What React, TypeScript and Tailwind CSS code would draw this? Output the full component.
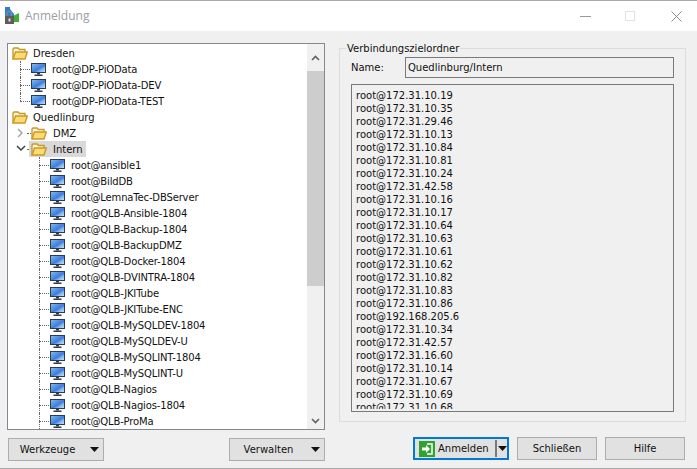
const font = { fontFamily: '"DejaVu Sans", sans-serif' };

function Folder() {
  return (
    <svg width="16" height="13" viewBox="0 0 16 13" className="shrink-0">
      <path d="M1 12V2L2 1H6L7.5 2.5H13V5" fill="#fff6cf" stroke="#c8982c" strokeWidth="1.4" />
      <path d="M1 12L3.5 5H15.3L13 12Z" fill="#fcdc6e" stroke="#c8982c" strokeWidth="1.4" />
    </svg>
  );
}

function Monitor() {
  return (
    <svg width="15" height="13" viewBox="0 0 15 13" className="shrink-0">
      <defs>
        <linearGradient id="scr" x1="0" y1="0" x2="1" y2="1">
          <stop offset="0" stopColor="#8bbcf0" />
          <stop offset="0.55" stopColor="#3b7fdb" />
          <stop offset="0.7" stopColor="#7fb0ea" />
          <stop offset="1" stopColor="#d8e8f8" />
        </linearGradient>
      </defs>
      <rect x="0.5" y="0.5" width="14" height="9" fill="url(#scr)" stroke="#2c3b4d" />
      <rect x="6" y="10" width="3" height="1.5" fill="#2c3b4d" />
      <rect x="3.5" y="11.5" width="8" height="1.5" fill="#2c3b4d" />
    </svg>
  );
}

type Row = { label: string; kind: "group" | "folder" | "host" | "sub"; chevron?: "right" | "down"; selected?: boolean; last?: boolean };

const rows: Row[] = [
  { label: "Dresden", kind: "group" },
  { label: "root@DP-PiOData", kind: "host" },
  { label: "root@DP-PiOData-DEV", kind: "host" },
  { label: "root@DP-PiOData-TEST", kind: "host", last: true },
  { label: "Quedlinburg", kind: "group" },
  { label: "DMZ", kind: "folder", chevron: "right" },
  { label: "Intern", kind: "folder", chevron: "down", selected: true },
  ...[
    "root@ansible1",
    "root@BildDB",
    "root@LemnaTec-DBServer",
    "root@QLB-Ansible-1804",
    "root@QLB-Backup-1804",
    "root@QLB-BackupDMZ",
    "root@QLB-Docker-1804",
    "root@QLB-DVINTRA-1804",
    "root@QLB-JKITube",
    "root@QLB-JKITube-ENC",
    "root@QLB-MySQLDEV-1804",
    "root@QLB-MySQLDEV-U",
    "root@QLB-MySQLINT-1804",
    "root@QLB-MySQLINT-U",
    "root@QLB-Nagios",
    "root@QLB-Nagios-1804",
    "root@QLB-ProMa",
  ].map((label) => ({ label, kind: "sub" as const })),
];

const ips = [
  "172.31.10.19", "172.31.10.35", "172.31.29.46", "172.31.10.13", "172.31.10.84", "172.31.10.81",
  "172.31.10.24", "172.31.42.58", "172.31.10.16", "172.31.10.17", "172.31.10.64", "172.31.10.63",
  "172.31.10.61", "172.31.10.62", "172.31.10.82", "172.31.10.83", "172.31.10.86", "192.168.205.6",
  "172.31.10.34", "172.31.42.57", "172.31.16.60", "172.31.10.14", "172.31.10.67", "172.31.10.69", "172.31.10.68",
];

function TreeRow({ r }: { r: Row }) {
  if (r.kind === "group") {
    return (
      <div className="h-4 flex items-center pl-[4px] gap-[5px]">
        <Folder />
        <span>{r.label}</span>
      </div>
    );
  }
  if (r.kind === "host") {
    return (
      <div className="h-4 flex items-center pl-[23px] gap-[6px] relative">
        <span className={`absolute top-0 left-[12px] w-0 border-l border-dotted border-[#666] ${r.last ? "h-[8px]" : "h-full"}`} />
        <span className="absolute top-[8px] left-[12px] w-[10px] h-0 border-t border-dotted border-[#666]" />
        <Monitor />
        <span className="tracking-[-0.15px]">{r.label}</span>
      </div>
    );
  }
  if (r.kind === "folder") {
    return (
      <div className="h-4 flex items-center pl-[21px] relative">
        <span className="absolute top-[8px] left-[19px] w-[4px] h-0 border-t border-dotted border-[#666]" />
        <span className="absolute left-[8px] top-[3px]">
          {r.chevron === "right" ? (
            <svg width="8" height="10" viewBox="0 0 8 10" className="block"><path d="M2 1L6 5L2 9" fill="none" stroke="#a6a6a6" strokeWidth="1.5" /></svg>
          ) : (
            <svg width="10" height="8" viewBox="0 0 10 8" className="block"><path d="M1 2L5 6L9 2" fill="none" stroke="#404040" strokeWidth="1.5" /></svg>
          )}
        </span>
        <div className={`relative flex items-center gap-[6px] h-4 pl-[2px] pr-[3px] ${r.selected ? "bg-[#d9d9d9]" : ""}`}>
          <Folder />
          <span>{r.label}</span>
        </div>
      </div>
    );
  }
  return (
    <div className="h-4 flex items-center pl-[42px] gap-[6px] relative">
      <span className="absolute top-0 h-full w-0 border-l border-dotted border-[#666] left-[31px]" />
      <span className="absolute top-[8px] left-[31px] w-[10px] h-0 border-t border-dotted border-[#666]" />
      <Monitor />
      <span className="tracking-[-0.15px]">{r.label}</span>
    </div>
  );
}

function DropButton({ label }: { label: string }) {
  return (
    <button className="w-[96px] h-[23px] border border-[#adadad] bg-[#e1e1e1] flex items-center">
      <span className="w-[77px] text-center">{label}</span>
      <svg width="9" height="5" viewBox="0 0 9 5" className="ml-[4px] shrink-0"><path d="M0 0H9L4.5 5Z" fill="#111" /></svg>
    </button>
  );
}

export default function App() {
  return (
    <div className="w-[697px] h-[469px] bg-[#f0f0f0] flex flex-col overflow-hidden text-[10px] text-[#111] border-t border-b border-[#a9a9a9]" style={font}>
      <div className="h-[30px] bg-white flex items-center shrink-0">
        <svg width="18" height="18" viewBox="0 0 18 18" className="ml-[4px] shrink-0">
          <path d="M1 0H6V2L10 7V10H1Z" fill="#2f7fd0" />
          <path d="M9 9L15 6V15H9L8 12Z" fill="#3fae34" />
          <path d="M3 9V6.5a2.2 2.2 0 0 1 4.4 0V9" fill="none" stroke="#888" strokeWidth="1.3" />
          <rect x="1" y="9" width="9" height="8" fill="#5c5c5c" />
          <rect x="4.5" y="11.5" width="2" height="3" fill="#ddd" />
        </svg>
        <span className="ml-[3px] text-[12px] text-[#9aa0a6] font-['Open_Sans']">Anmeldung</span>
        <div className="ml-auto flex items-center">
          <span className="w-[11px] h-px bg-[#9a9a9a] mr-[34px]" />
          <span className="w-[10px] h-[10px] border border-[#e3e3e3] mr-[36px]" />
          <svg width="11" height="11" viewBox="0 0 11 11" className="mr-[15px] shrink-0"><path d="M0.5 0.5L10.5 10.5M10.5 0.5L0.5 10.5" stroke="#8c8c8c" /></svg>
        </div>
      </div>

      <div className="flex flex-1 min-h-0 pt-[12px] pl-[7px] pr-[11px] gap-[14px]">
        <div className="w-[318px] flex flex-col shrink-0">
          <div className="h-[387px] border border-[#828790] bg-white flex overflow-hidden shrink-0">
            <div className="flex-1 pt-px overflow-hidden">
              {rows.map((r) => <TreeRow key={r.label} r={r} />)}
            </div>
            <div className="w-[17px] bg-[#f0f0f0] flex flex-col shrink-0">
              <div className="h-[27px] flex items-center justify-center">
                <svg width="9" height="6" viewBox="0 0 9 6"><path d="M1 5L4.5 1.5L8 5" fill="none" stroke="#606060" strokeWidth="1.6" /></svg>
              </div>
              <div className="h-[215px] bg-[#cdcdcd]" />
              <div className="mt-auto h-[17px] flex items-center justify-center">
                <svg width="9" height="6" viewBox="0 0 9 6"><path d="M1 1L4.5 4.5L8 1" fill="none" stroke="#606060" strokeWidth="1.6" /></svg>
              </div>
            </div>
          </div>
          <div className="flex justify-between mt-[8px] pl-px">
            <DropButton label="Werkzeuge" />
            <DropButton label="Verwalten" />
          </div>
        </div>

        <div className="flex-1 flex flex-col">
          <div className="h-[374px] mt-[5px] border border-[#dcdcdc] relative px-[11px] flex flex-col shrink-0">
            <span className="absolute -top-[7px] left-[6px] bg-[#f0f0f0] px-px leading-[14px]">Verbindungszielordner</span>
            <div className="flex items-center mt-[8px] h-[21px]">
              <span className="w-[54px]">Name:</span>
              <div className="flex-1 h-[21px] border border-[#7a7a7a] flex items-center pl-[2px]">Quedlinburg/Intern</div>
            </div>
            <div className="mt-[6px] h-[328px] border border-[#7a7a7a] pl-[4px] pt-[3px] pb-[2px]">
              <div className="h-full overflow-hidden leading-[13px] pt-px">
                {ips.map((ip) => <div key={ip}>root@{ip}</div>)}
              </div>
            </div>
          </div>
          <div className="flex mt-[15px] gap-[8px] pr-px justify-end">
            <div className="w-[96px] h-[23px] border-2 border-[#0078d7] bg-[#e1e1e1] flex items-center shrink-0">
              <svg width="16" height="16" viewBox="0 0 16 16" className="ml-[4px] shrink-0">
                <rect width="16" height="16" fill="#2ea32e" />
                <path d="M8 3H13V13H8" fill="none" stroke="#fff" strokeWidth="1.5" />
                <path d="M3 6.5H7V4L11 8L7 12V9.5H3Z" fill="#fff" />
              </svg>
              <span className="ml-[3px] w-[57px]">Anmelden</span>
              <span className="w-[2px] h-[17px] bg-[#7a7a7a] shrink-0" />
              <svg width="9" height="5" viewBox="0 0 9 5" className="ml-px shrink-0"><path d="M0 0H9L4.5 5Z" fill="#111" /></svg>
            </div>
            <button className="w-[80px] h-[23px] border border-[#adadad] bg-[#e1e1e1] shrink-0">Schließen</button>
            <button className="w-[80px] h-[23px] border border-[#adadad] bg-[#e1e1e1] shrink-0">Hilfe</button>
          </div>
        </div>
      </div>
    </div>
  );
}
